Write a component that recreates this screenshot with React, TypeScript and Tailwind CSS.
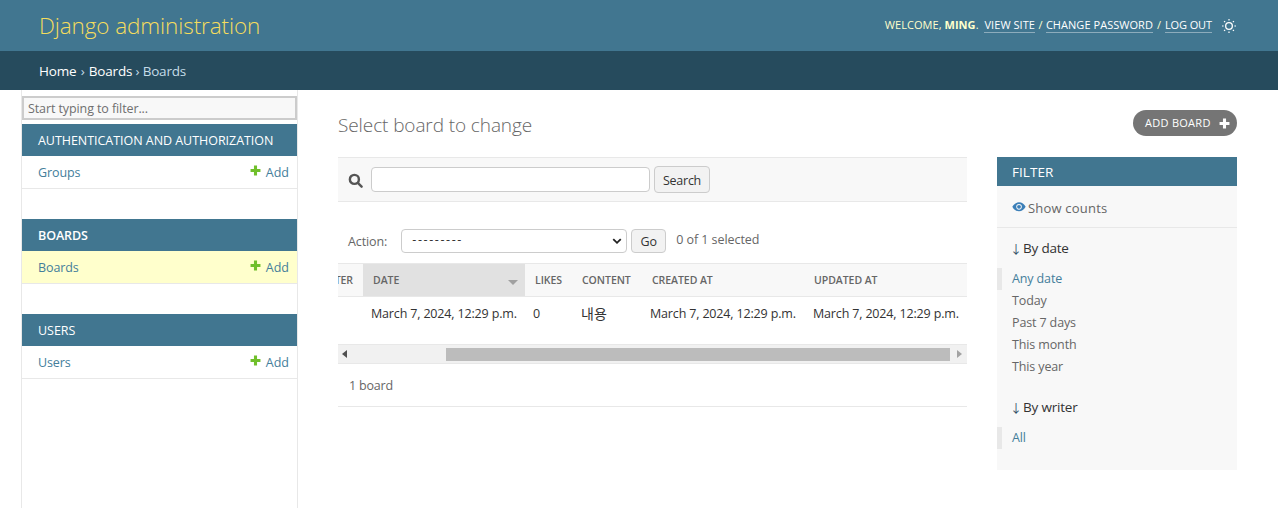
import React from "react";

const font = { fontFamily: '"Open Sans","Noto Sans CJK KR",sans-serif' };

function Plus({ className }: { className: string }) {
  return (
    <svg viewBox="0 0 10 10" className={className} fill="currentColor">
      <path d="M3.6 0.5h2.8v3.1h3.1v2.8H6.4v3.1H3.6V6.4H0.5V3.6h3.1z" />
    </svg>
  );
}

function Sun() {
  return (
    <svg viewBox="0 0 24 24" className="w-4 h-4 text-white" fill="none" stroke="currentColor">
      <circle cx="12" cy="12" r="5" strokeWidth="2" />
      <path strokeWidth="1.8" d="M12 1.5v2.4M12 20.1v2.4M1.5 12h2.4M20.1 12h2.4M4.6 4.6l1.6 1.6M17.8 17.8l1.6 1.6M4.6 19.4l1.6-1.6M17.8 6.2l1.6-1.6" />
    </svg>
  );
}

function Eye() {
  return (
    <svg viewBox="0 0 16 12" className="w-[14px] h-[10px] text-[#3b7fb8]" fill="currentColor">
      <path fillRule="evenodd" d="M8 0.4C4.6 0.4 1.6 2.6 0 5.8c1.6 3.2 4.6 5.4 8 5.4s6.4-2.2 8-5.4C14.4 2.6 11.4 0.4 8 0.4zM8 2.4a3.4 3.4 0 1 1 0 6.8 3.4 3.4 0 0 1 0-6.8z" />
      <circle cx="8" cy="5.8" r="2.3" />
    </svg>
  );
}

function SideModule({ title, row, active }: { title: string; row: string; active?: boolean }) {
  return (
    <div className="mb-[30px]">
      <div className={`h-8 bg-[#417690] text-white text-[12.5px] pl-4 pt-[2px] flex items-center ${active ? "font-semibold tracking-[-0.1px]" : "tracking-[-0.04px]"}`}>{title}</div>
      <div className={`h-[33px] border-b border-[#e8e8e8] flex items-center justify-between pl-4 pr-2 pt-[2px] text-[12.5px] ${active ? "bg-[#ffffcc]" : ""}`}>
        <span className="font-medium text-[#447e9b] tracking-[-0.1px]">{row}</span>
        <span className="flex items-center gap-[5px] text-[#447e9b]">
          <Plus className="w-[11px] h-[11px] text-[#70bf2b] -mt-[5px]" />
          Add
        </span>
      </div>
    </div>
  );
}

function Th({ w, children, sorted }: { w: string; children: React.ReactNode; sorted?: boolean }) {
  return (
    <div className={`${w} shrink-0 h-full flex items-center justify-between pl-[10px] pr-[7px] pt-[1px] text-[10.5px] font-semibold tracking-[-0.05px] text-[#666] ${sorted ? "bg-[#e1e1e1]" : ""}`}>
      <span>{children}</span>
      {sorted && <span className="w-0 h-0 mt-[3px] border-x-[5px] border-x-transparent border-t-[5px] border-t-[#a0a0a0]" />}
    </div>
  );
}

function Td({ w, children }: { w: string; children: React.ReactNode }) {
  return <div className={`${w} shrink-0 text-[12.5px] tracking-[-0.16px] text-[#333] whitespace-nowrap`}>{children}</div>;
}

function FilterLink({ children, on }: { children: React.ReactNode; on?: boolean }) {
  return (
    <div className={`h-[22px] flex items-center text-[12.5px] tracking-[-0.13px] pl-[10px] border-l-[5px] ${on ? "border-[#e8e8e8] text-[#447e9b]" : "border-transparent text-[#666]"}`}>
      {children}
    </div>
  );
}

function FilterTitle({ className, children }: { className: string; children: React.ReactNode }) {
  return (
    <div className={`pl-[13px] flex items-start text-[13.5px] tracking-[-0.2px] text-[#333] ${className}`}>
      <span className="w-[13px] shrink-0 mt-[3px] text-[12px] text-[#2d4a63]">↓</span>
      {children}
    </div>
  );
}

export default function App() {
  return (
    <div style={font} className="w-[1278px] h-[508px] overflow-hidden bg-white text-[#333]">
      <header className="h-[51px] bg-[#417690] flex items-center justify-between pl-[39px] pr-[41px]">
        <div className="text-[22.5px] font-light text-[#f5dd5d] tracking-[-0.1px]">Django administration</div>
        <div className="flex items-center text-[11px] tracking-[0.05px] text-[#ffc] whitespace-pre">
          <span>WELCOME, </span>
          <strong className="font-bold">MING</strong>
          <span className="mr-[3px]">. </span>
          <span className="text-white border-b border-white/40 leading-[14px]">VIEW SITE</span>
          <span className="mx-[0.5px]"> / </span>
          <span className="text-white border-b border-white/40 leading-[14px]">CHANGE PASSWORD</span>
          <span className="mx-[1px]"> / </span>
          <span className="text-white border-b border-white/40 leading-[14px] tracking-[-0.1px]">LOG OUT</span>
          <span className="ml-[9px]"><Sun /></span>
        </div>
      </header>
      <div className="h-[39px] bg-[#264b5d] flex items-center pl-[39px] pt-[1px] text-[13.5px] tracking-[-0.2px] text-white whitespace-pre">
        <span>Home</span>
        <span className="text-[#c4dce8] mx-[1px]"> › </span>
        <span>Boards</span>
        <span className="text-[#c4dce8]"> › </span>
        <span className="text-[#c4dce8]">Boards</span>
      </div>
      <div className="flex h-[418px]">
        <aside className="ml-[21px] w-[277px] shrink-0 border-x border-[#e8e8e8] pt-[6px]">
          <div className="h-[24px] mb-[4px] border-2 border-[#cccccc] bg-[#f8f8f8] pl-[4px] pt-[3px] flex items-center text-[12.5px] tracking-[-0.1px] text-[#6f6f6f]">
            Start typing to filter...
          </div>
          <SideModule title="AUTHENTICATION AND AUTHORIZATION" row="Groups" />
          <SideModule title="BOARDS" row="Boards" active />
          <SideModule title="USERS" row="Users" />
        </aside>
        <main className="flex-1 pl-10 pr-[41px] pt-5">
          <div className="flex items-center justify-between h-[26px] mb-[21px]">
            <h1 className="text-[19px] font-light text-[#666] tracking-[-0.1px] mt-[4px]">Select board to change</h1>
            <div className="h-[26px] w-[104px] rounded-full bg-[#757575] text-white text-[11px] tracking-[0.28px] flex items-center pl-3 gap-2 whitespace-nowrap">
              ADD BOARD
              <Plus className="w-[11px] h-[11px] text-white" />
            </div>
          </div>
          <div className="flex gap-[30px]">
            <div className="w-[629px] shrink-0">
              <div className="h-[45px] bg-[#f8f8f8] border-y border-[#e8e8e8] flex items-center pl-[10px]">
                <svg viewBox="0 0 16 16" className="w-[15px] h-[15px] mt-px text-[#555]" fill="none" stroke="currentColor" strokeWidth="2.6">
                  <circle cx="6.8" cy="6.8" r="4.8" />
                  <path d="M10.5 10.5l4 4" strokeLinecap="round" />
                </svg>
                <div className="ml-2 w-[279px] h-[25px] rounded border border-[#cccccc] bg-white" />
                <div className="ml-[4px] w-[56px] h-[27px] rounded border border-[#cccccc] bg-[#f2f2f2] pt-[3px] text-[12.5px] tracking-[-0.25px] text-[#333] flex items-center justify-center">Search</div>
              </div>
              <div className="h-[61px] flex items-center pl-[10px] pt-[16px] text-[12.5px] tracking-[-0.1px] text-[#666]">
                <span className="pt-[4px]">Action:</span>
                <div className="ml-[14px] w-[226px] h-[24px] rounded border border-[#cccccc] bg-white flex items-center justify-between pl-[10px] pr-[4px] text-[#333]">
                  <span className="tracking-[1.6px]">---------</span>
                  <svg viewBox="0 0 12 12" className="w-[10px] h-[10px] text-[#222]" fill="none" stroke="currentColor" strokeWidth="2.2"><path d="M1.5 3.8L6 8.2l4.5-4.4" /></svg>
                </div>
                <div className="ml-[4px] w-[35px] h-[24px] pt-[3px] rounded border border-[#cccccc] bg-[#f2f2f2] flex items-center justify-center text-[#333]">Go</div>
                <span className="ml-[10px] -mt-[1px] tracking-[-0.06px]">0 of 1 selected</span>
              </div>
              <div className="h-[34px] bg-[#f8f8f8] border-y border-[#e8e8e8] flex">
                <div className="w-[25px] shrink-0 flex items-center justify-end overflow-hidden text-[10.5px] font-semibold tracking-[-0.05px] text-[#666] pr-[10px] pt-[1px]">TER</div>
                <Th w="w-[162px]" sorted>DATE</Th>
                <Th w="w-[47px]">LIKES</Th>
                <Th w="w-[70px]">CONTENT</Th>
                <Th w="w-[162px]">CREATED AT</Th>
                <Th w="w-[163px]">UPDATED AT</Th>
              </div>
              <div className="h-[48px] border-b border-[#e8e8e8] flex items-start pt-[8px] pl-[33px]">
                <Td w="w-[162px]">March 7, 2024, 12:29 p.m.</Td>
                <Td w="w-[48px]">0</Td>
                <Td w="w-[69px]"><span className="inline-block -translate-y-[2px] text-[14px] tracking-normal">내용</span></Td>
                <Td w="w-[163px]">March 7, 2024, 12:29 p.m.</Td>
                <Td w="w-[154px]">March 7, 2024, 12:29 p.m.</Td>
              </div>
              <div className="h-[18px] bg-[#f1f1f1] flex items-center">
                <span className="ml-1 w-0 h-0 border-y-[4px] border-y-transparent border-r-[5px] border-r-[#505050]" />
                <div className="ml-[99px] w-[504px] h-[13px] bg-[#bcbcbc]" />
                <span className="ml-[7px] w-0 h-0 border-y-[4px] border-y-transparent border-l-[5px] border-l-[#a3a3a3]" />
              </div>
              <div className="h-[44px] border-b border-[#e8e8e8] border-t flex items-center pl-[11px] pt-[2px] text-[12.5px] tracking-[-0.2px] text-[#666]">1 board</div>
            </div>
            <div className="w-[240px] h-[313px] shrink-0 bg-[#f8f8f8]">
              <div className="h-[29px] bg-[#417690] text-white text-[13.5px] tracking-[0.05px] pl-[15px] pt-[1px] flex items-center">FILTER</div>
              <div className="h-[42px] border-b border-[#e8e8e8] flex items-center gap-[2px] pl-[15px] pt-[5px] text-[13px] tracking-[0.2px] text-[#666]">
                <span className="-mt-[4px]"><Eye /></span>
                Show counts
              </div>
              <FilterTitle className="pt-[10px] h-[40px]">By date</FilterTitle>
              <FilterLink on>Any date</FilterLink>
              <FilterLink>Today</FilterLink>
              <FilterLink>Past 7 days</FilterLink>
              <FilterLink>This month</FilterLink>
              <FilterLink>This year</FilterLink>
              <FilterTitle className="pt-[19px] h-[49px]">By writer</FilterTitle>
              <FilterLink on>All</FilterLink>
            </div>
          </div>
        </main>
      </div>
    </div>
  );
}
